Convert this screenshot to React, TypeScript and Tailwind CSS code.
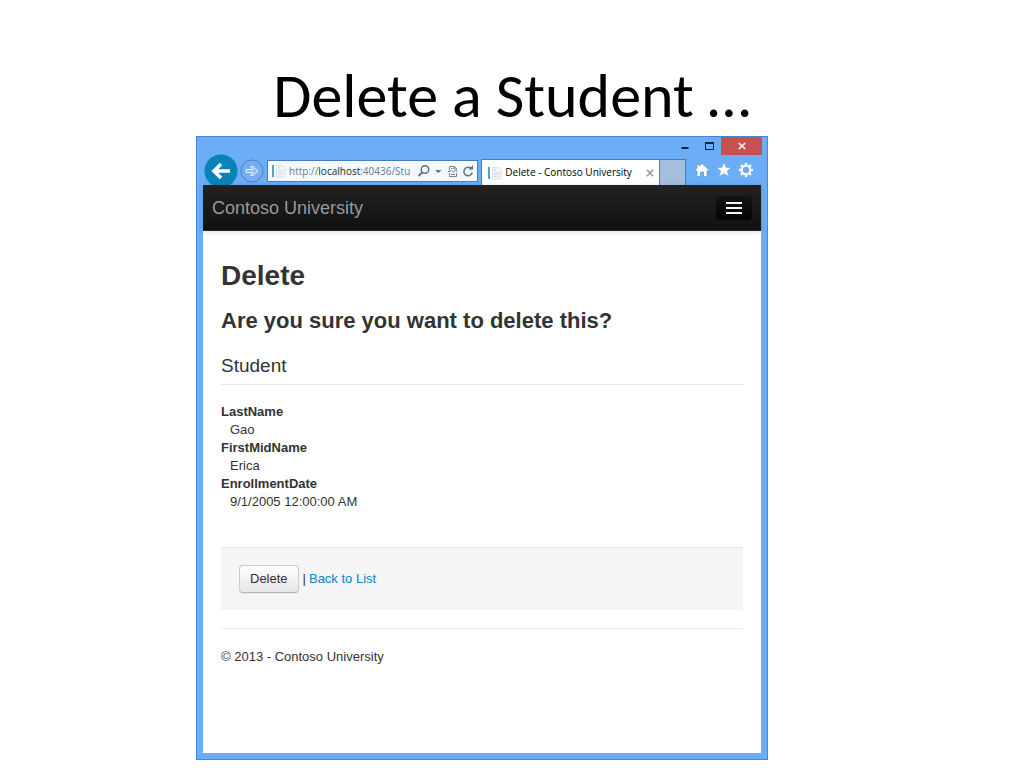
import React from "react";

const student = [
  { label: "LastName", value: "Gao" },
  { label: "FirstMidName", value: "Erica" },
  { label: "EnrollmentDate", value: "9/1/2005 12:00:00 AM" },
];

function PageIcon() {
  return (
    <svg viewBox="0 0 14 14" className="h-3.5 w-3.5 shrink-0" aria-hidden="true">
      <path d="M0 1h2v12H0z" fill="#5b9fc4" />
      <path d="M4.5 1.500h6l2.500 2.500v9h-8.500z" fill="#f4f6f8" stroke="#dbe1e6" />
      <path d="M6 6.500h5M6 8.500h5M6 10.500h5" stroke="#d5dbe0" />
      <path d="M6 4h2" stroke="#e3b7b7" />
    </svg>
  );
}

function Caption() {
  return (
    <div className="flex h-[18px] items-start justify-end">
      <button aria-label="Minimize" className="flex h-[18px] w-6 items-center justify-center">
        <svg viewBox="0 0 10 10" className="h-2.5 w-2.5"><path d="M1.500 6h7v2h-7z" fill="#12233c" /></svg>
      </button>
      <button aria-label="Maximize" className="flex h-[18px] w-6 items-center justify-center">
        <svg viewBox="0 0 10 10" className="h-2.5 w-2.5"><path d="M1 1h9v8H1zM2 3v5h7V3z" fill="#12233c" fillRule="evenodd" /></svg>
      </button>
      <button aria-label="Close window" className="flex h-[18px] w-[41px] items-center justify-center bg-[#c75050]">
        <svg viewBox="0 0 8 8" className="h-2 w-2"><path d="M.8 1l6.400 6M7.200 1L.8 7" stroke="#fff" strokeWidth="1.600" /></svg>
      </button>
    </div>
  );
}

function Toolbar() {
  return (
    <div className="flex h-[30px] items-start text-[10px]">
      <button aria-label="Back" className="-mt-px h-[31px] w-[35px] shrink-0">
        <svg viewBox="0 0 35 31" className="h-[31px] w-[35px]">
          <circle cx="18" cy="17" r="16.500" fill="#0783b8" />
          <path d="M27 17H11M18 10L11 17l7 7" fill="none" stroke="#fff" strokeWidth="3.600" />
        </svg>
      </button>
      <button aria-label="Forward" className="mt-1 ml-0.5 h-6 w-6 shrink-0">
        <svg viewBox="0 0 24 24" className="h-6 w-6">
          <circle cx="12" cy="12" r="11" fill="#75aef0" stroke="#4c83c6" />
          <path d="M6 10.500h7l-2.500-3h2.500l5 4.500-5 4.500h-2.500l2.500-3H6z" fill="#8fbcf2" stroke="#e4f0fe" strokeWidth="1" />
        </svg>
      </button>
      <div className="mt-[5px] ml-[3px] flex h-[22px] min-w-0 flex-[213] items-center border border-[#437eb9] bg-[#f3f9ff] pl-1">
        <PageIcon />
        <div className="ml-[3px] min-w-0 flex-1 font-['Open_Sans','Noto_Sans',sans-serif] whitespace-nowrap text-[#707984]">
          http://<span className="font-medium text-[#1c2732]">localhost</span>:40436/Stu
        </div>
        <button aria-label="Search" className="h-[14px] w-[14px] shrink-0">
          <svg viewBox="0 0 14 14" className="h-3.5 w-3.5" fill="none" stroke="#68737e"><circle cx="8" cy="5.500" r="3.800" strokeWidth="1.500" /><path d="M5.300 8.300L1.500 12" strokeWidth="2" /></svg>
        </button>
        <button aria-label="Show addresses" className="h-[14px] w-[14px] shrink-0">
          <svg viewBox="0 0 14 14" className="h-3.5 w-3.5"><path d="M4 6h6.500L7.200 9z" fill="#68737e" /></svg>
        </button>
        <button aria-label="Compatibility view" className="ml-0.5 h-[14px] w-[12px] shrink-0">
          <svg viewBox="0 0 12 14" className="h-3.5 w-3" fill="none" stroke="#78838d"><path d="M2.500 6V2.500h5l2 2V6M2.500 9v3.500h7V9M7 2.500V5h2.500M1 7.500h2l1.500-1 2 1.500 2-1.500 2 1M4 10.500h4M4 4.500h1.500" /></svg>
        </button>
        <button aria-label="Refresh" className="mr-[3px] ml-[3px] h-[14px] w-[12px] shrink-0">
          <svg viewBox="0 0 12 14" className="h-3.5 w-3"><path d="M9.500 5A4.200 4.200 0 1 0 10.200 8.500" fill="none" stroke="#68737e" strokeWidth="1.500" /><path d="M6.500 5.500h4.500V1z" fill="#68737e" /></svg>
        </button>
      </div>
      <div className="mt-1 ml-[3px] flex h-[26px] min-w-0 flex-[177] items-center border border-b-0 border-[#437eb9] bg-white pl-1.5">
        <PageIcon />
        <span className="ml-[3px] min-w-0 flex-1 font-['Open_Sans','Noto_Sans',sans-serif] whitespace-nowrap text-black">Delete - Contoso University</span>
        <button aria-label="Close tab" className="mr-[5px] h-2 w-2 shrink-0">
          <svg viewBox="0 0 8 8" className="h-2 w-2"><path d="M.8.8l6.400 6.400M7.200.8L.8 7.200" stroke="#969696" strokeWidth="1.500" /></svg>
        </button>
      </div>
      <button aria-label="New tab" className="mt-1 h-[26px] w-[26px] shrink-0 border border-b-0 border-l-0 border-[#437eb9] bg-[#a4bedb]" />
      <div className="mt-[7px] mr-2 ml-2 flex shrink-0 gap-1.5">
        <button aria-label="Home" className="h-4 w-4">
          <svg viewBox="0 0 16 16" className="h-4 w-4"><path d="M8 1.500L15 8l-1.200 1.300-.8-.7V14.500H9.500V10h-3v4.500H3V8.600l-.8.7L1 8l2-1.900V2.500h2v1.700z" fill="#fff" stroke="#528fd2" strokeWidth=".6" /></svg>
        </button>
        <button aria-label="Favorites" className="h-4 w-4">
          <svg viewBox="0 0 16 16" className="h-4 w-4"><path d="M8 .4l2.100 5.100h5.500l-4.400 3.500 1.700 5.600L8 11.400l-4.900 3.200L4.800 9 .4 5.500h5.500z" fill="#fff" stroke="#528fd2" strokeWidth=".4" /></svg>
        </button>
        <button aria-label="Tools" className="h-4 w-4">
          <svg viewBox="0 0 16 16" className="h-4 w-4" fill="none" stroke="#fff"><circle cx="8" cy="8" r="4.200" strokeWidth="2" /><path d="M8 1v2.500M8 12.500V15M1 8h2.500M12.500 8H15M3.050 3.050l1.800 1.800M11.150 11.150l1.800 1.800M3.050 12.950l1.800-1.800M11.150 4.850l1.800-1.800" strokeWidth="2.400" /></svg>
        </button>
      </div>
    </div>
  );
}

export default function App() {
  return (
    <div className="flex min-h-screen flex-col bg-white pb-2">
      <h1 className="flex h-[136px] shrink-0 items-end justify-center pb-2 font-[Carlito,Calibri,Lato,sans-serif] text-[62px] leading-[64px] whitespace-nowrap text-black">
        Delete a Student …
      </h1>
      <div className="mr-64 ml-49 flex flex-1 flex-col border border-[#4a87cc] bg-[#6badf6] px-1.5 pb-1.5 font-['Liberation_Sans',Arial,sans-serif]">
        <div className="-mr-1.5 flex flex-col pr-[5px]">
          <Caption />
          <Toolbar />
        </div>
        <div className="flex flex-1 flex-col bg-white text-[13px] leading-[18px] text-[#333]">
          <header className="flex h-[46px] items-center justify-between border-b border-[#252525] bg-linear-to-b from-[#222] to-[#111] pr-[9px] pl-[9px] shadow-[0_1px_5px_rgba(0,0,0,0.15)]">
            <a href="#home" className="text-[18px] leading-5 text-[#999]">Contoso University</a>
            <button aria-label="Toggle navigation" className="flex h-6 w-9 flex-col items-center justify-center gap-[3px] rounded bg-linear-to-b from-[#151515] to-[#040404]">
              <span className="h-0.5 w-4 bg-[#f5f5f5]" />
              <span className="h-0.5 w-4 bg-[#f5f5f5]" />
              <span className="h-0.5 w-4 bg-[#f5f5f5]" />
            </button>
          </header>
          <main className="px-[18px] pt-[27px]">
            <h2 className="text-[28px] leading-9 font-bold">Delete</h2>
            <h3 className="mt-[9px] text-[22px] leading-9 font-bold">Are you sure you want to delete this?</h3>
            <section>
              <h4 className="mt-[9px] border-b border-[#e5e5e5] text-[19px] leading-9">Student</h4>
              <dl className="mt-[18px]">
                {student.map((field) => (
                  <React.Fragment key={field.label}>
                    <dt className="font-bold">{field.label}</dt>
                    <dd className="pl-[9px]">{field.value}</dd>
                  </React.Fragment>
                ))}
              </dl>
            </section>
            <form onSubmit={(e) => e.preventDefault()} className="mt-9 flex items-center border-t border-[#e5e5e5] bg-[#f5f5f5] px-[18px] py-[17px]">
              <button type="submit" className="h-7 rounded border border-[#ccc] border-b-[#b3b3b3] bg-linear-to-b from-white to-[#e6e6e6] px-2.5 shadow-[0_1px_2px_rgba(0,0,0,0.05)]">Delete</button>
              <span className="ml-1">|</span>
              <a href="#students" className="ml-[3px] text-[#0088cc]">Back to List</a>
            </form>
            <footer className="mt-[18px] border-t border-[#eee] pt-[19px]">© 2013 - Contoso University</footer>
          </main>
        </div>
      </div>
    </div>
  );
}
